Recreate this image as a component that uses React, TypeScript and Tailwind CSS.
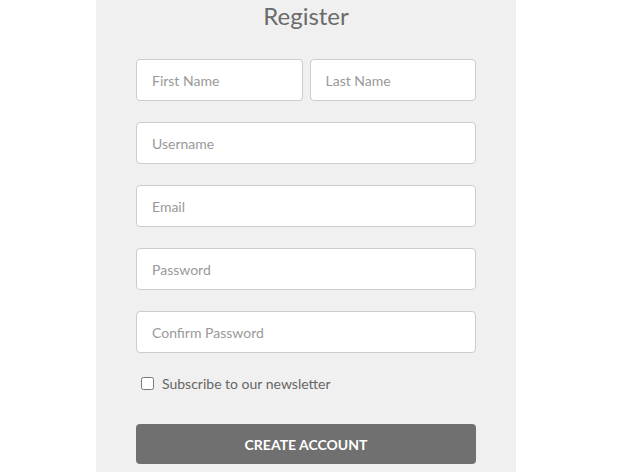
import { useState } from 'react';

const Field = ({ placeholder, type = 'text' }: { placeholder: string; type?: string }) => (
  <input
    type={type}
    placeholder={placeholder}
    className="h-[42px] w-full rounded-[4px] border border-[#cccccc] bg-white px-[15px] text-[14px] text-[#555] placeholder:text-[#999] outline-none"
  />
);

const App = () => {
  const [subscribe, setSubscribe] = useState(false);

  return (
    <div className="min-h-[472px] bg-white font-['Lato',sans-serif]">
      <section className="ml-[96px] w-[420px] min-h-[472px] bg-[#f0f0f0] px-[40px] pt-[4px]">
        <h1 className="text-center text-[24px] leading-[24px] text-[#6b6b6b]">Register</h1>

        <form className="mt-[31px] flex flex-col gap-[21px]" onSubmit={(e) => e.preventDefault()}>
          <div className="flex gap-[7px]">
            <Field placeholder="First Name" />
            <Field placeholder="Last Name" />
          </div>
          <Field placeholder="Username" />
          <Field placeholder="Email" type="email" />
          <Field placeholder="Password" type="password" />
          <Field placeholder="Confirm Password" type="password" />

          {/* Newsletter */}
          <label className="-mt-[1px] flex items-center gap-[8px] pl-[5px] text-[14px] text-[#666]">
            <input
              type="checkbox"
              checked={subscribe}
              onChange={() => setSubscribe((prev) => !prev)}
              className="m-0 h-[13px] w-[13px]"
            />
            <span>Subscribe to our newsletter</span>
          </label>

          <button
            type="submit"
            className="mt-[9px] h-[40px] w-full rounded-[4px] bg-[#707070] text-[14px] font-bold uppercase text-white"
          >
            Create Account
          </button>
        </form>
      </section>
    </div>
  );
};

export default App;
